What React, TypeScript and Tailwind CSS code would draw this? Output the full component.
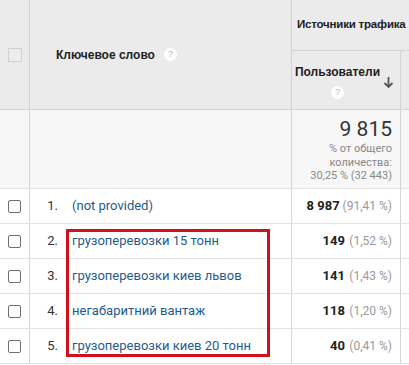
import React from 'react';

const rows = [
  { n: '1.', kw: '(not provided)', v: '8 987', p: '(91,41 %)' },
  { n: '2.', kw: 'грузоперевозки 15 тонн', v: '149', p: '(1,52 %)' },
  { n: '3.', kw: 'грузоперевозки киев львов', v: '141', p: '(1,43 %)' },
  { n: '4.', kw: 'негабаритний вантаж', v: '118', p: '(1,20 %)' },
  { n: '5.', kw: 'грузоперевозки киев 20 тонн', v: '40', p: '(0,41 %)' },
];

function Help() {
  return (
    <span className="inline-flex h-[13px] w-[13px] items-center justify-center rounded-full bg-white text-[9px] font-normal leading-none text-[#b5b5b5]">
      ?
    </span>
  );
}

export default function App() {
  return (
    <div className="relative h-[365px] w-[409px] overflow-hidden bg-white font-['Roboto',sans-serif] text-[13px] text-[#333]">
      {/* шапка */}
      <div className="flex h-[110px] border-b border-[#d4d4d4] bg-[#ebebeb] font-['Liberation_Sans',Arial,sans-serif]">
        <div className="flex w-[30px] shrink-0 items-center border-r border-[#d4d4d4] pl-[8px]">
          <div className="h-[14px] w-[14px] border border-[#d0d0d0] bg-[#ededed]" />
        </div>
        <div className="flex w-[262px] shrink-0 items-center gap-[9px] border-r border-[#d4d4d4] pl-[26px] text-[12px] font-bold text-[#222]">
          <span>Ключевое слово</span>
          <Help />
        </div>
        <div className="flex min-w-0 flex-1 flex-col">
          <div className="flex h-[51px] items-center border-b border-[#d4d4d4] pl-[5px] text-[11.5px] font-bold tracking-[-0.2px] whitespace-nowrap text-[#222]">
            Источники трафика
          </div>
          <div className="flex flex-1">
            <div className="flex w-[109px] shrink-0 items-center border-r border-[#d4d4d4]">
              <div className="flex w-[91px] flex-col items-center gap-[5px] pt-[2px] text-[12px] font-bold text-[#222]">
                <span>Пользователи</span>
                <Help />
              </div>
              <svg width="11" height="13" viewBox="0 0 11 13" className="mt-[4px]">
                <path d="M5.5 1v10M1.5 7l4 4 4-4" stroke="#555" strokeWidth="1.8" fill="none" />
              </svg>
            </div>
            <div className="flex-1" />
          </div>
        </div>
      </div>

      {/* итого */}
      <div className="flex h-[79px] border-b border-[#e3e3e3] bg-[#f7f7f7]">
        <div className="w-[30px] shrink-0 border-r border-[#d4d4d4]" />
        <div className="w-[262px] shrink-0 border-r border-[#d4d4d4]" />
        <div className="flex w-[109px] shrink-0 flex-col items-end border-r border-[#d4d4d4] pt-[6px] pr-[8px] text-right">
          <span className="text-[21px] leading-[26px] text-[#333]">9 815</span>
          <span className="text-[11px] leading-[13.5px] whitespace-nowrap text-[#888]">
            % от общего
            <br />
            количества:
            <br />
            30,25 % (32 443)
          </span>
        </div>
        <div className="flex-1" />
      </div>

      {/* строки */}
      {rows.map((r) => (
        <div key={r.n} className="flex h-[35px] border-b border-[#e3e3e3]">
          <div className="flex w-[30px] shrink-0 items-center border-r border-[#d4d4d4] pl-[8px]">
            <div className="h-[13px] w-[13px] rounded-[2px] border border-[#6f6f6f] bg-white" />
          </div>
          <div className="flex w-[262px] shrink-0 items-center border-r border-[#d4d4d4]">
            <span className="w-[28px] text-right text-[13px] text-[#333]">{r.n}</span>
            <span className="ml-[14px] text-[13px] whitespace-nowrap text-[#1f5a8d]">{r.kw}</span>
          </div>
          <div className="flex w-[109px] shrink-0 items-center justify-end border-r border-[#d4d4d4] pr-[8px]">
            <span className="text-[13px] font-bold whitespace-nowrap text-[#222]">{r.v}</span>
            <span className="ml-[3px] min-w-[44px] shrink-0 text-right text-[12px] whitespace-nowrap text-[#999]">{r.p}</span>
          </div>
          <div className="flex-1" />
        </div>
      ))}

      {/* рамка-выделение */}
      <div className="absolute top-[229px] left-[66px] h-[128px] w-[204px] border-[3px] border-[#d0101b]" />
    </div>
  );
}
